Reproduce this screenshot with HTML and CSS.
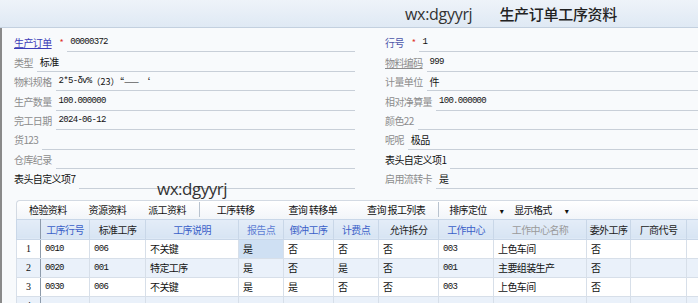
FILE: index.html
```html
<!DOCTYPE html>
<html lang="zh-CN">
<head>
  <meta charset="UTF-8" />
  <title>生产订单工序资料</title>
  <link rel="stylesheet" href="styles.css">
</head>
<body>

<header class="titlebar">
  <span class="tag">wx:dgyyrj</span>
  <span class="title">生产订单工序资料</span>
</header>

<main class="page">
  <section class="form">
    <div class="col">
      <div class="row"><span class="lbl link">生产订单</span><span class="req">*</span><span class="fld num">00000372</span></div>
      <div class="row"><span class="lbl">类型</span><span class="fld">标准</span></div>
      <div class="row"><span class="lbl">物料规格</span><span class="fld num">2*5-δv%<span class="wide">（23）“—— ‘</span></span></div>
      <div class="row"><span class="lbl">生产数量</span><span class="fld num">100.000000</span></div>
      <div class="row"><span class="lbl">完工日期</span><span class="fld num">2024-06-12</span></div>
      <div class="row"><span class="lbl">货123</span><span class="fld"></span></div>
      <div class="row"><span class="lbl">仓库纪录</span><span class="fld"></span></div>
      <div class="row"><span class="lbl dark">表头自定义项7</span><span class="fld"></span></div>
    </div>
    <div class="col">
      <div class="row"><span class="lbl blue">行号</span><span class="req">*</span><span class="fld num">1</span></div>
      <div class="row"><span class="lbl under">物料编码</span><span class="fld num">999</span></div>
      <div class="row"><span class="lbl">计量单位</span><span class="fld">件</span></div>
      <div class="row"><span class="lbl">相对净算量</span><span class="fld num">100.000000</span></div>
      <div class="row"><span class="lbl">颜色22</span><span class="fld"></span></div>
      <div class="row"><span class="lbl">呢呢</span><span class="fld">极品</span></div>
      <div class="row"><span class="lbl dark">表头自定义项1</span><span class="fld"></span></div>
      <div class="row"><span class="lbl">启用流转卡</span><span class="fld">是</span></div>
    </div>
  </section>

  <div class="stamp">wx:dgyyrj</div>

  <section class="grid">
    <div class="toolbar">
      <span class="btn">检验资料</span>
      <span class="btn">资源资料</span>
      <span class="btn">派工资料</span>
      <span class="sep"></span>
      <span class="btn w1">工序转移</span>
      <span class="btn w2">查询 转移单</span>
      <span class="btn">查询 报工列表</span>
      <span class="sep"></span>
      <span class="btn drop">排序定位<i>▾</i></span>
      <span class="btn drop">显示格式<i>▾</i></span>
    </div>
    <table>
      <colgroup>
        <col style="width:24px"><col style="width:49px"><col style="width:56px"><col style="width:93px">
        <col style="width:45px"><col style="width:50px"><col style="width:45px"><col style="width:60px">
        <col style="width:55px"><col style="width:93px"><col style="width:44px"><col style="width:56px">
        <col>
      </colgroup>
      <thead>
        <tr>
          <th class="rn"></th>
          <th class="b">工序行号</th>
          <th>标准工序</th>
          <th class="b">工序说明</th>
          <th class="b lite">报告点</th>
          <th class="b">倒冲工序</th>
          <th class="b">计费点</th>
          <th>允许拆分</th>
          <th class="b">工作中心</th>
          <th class="g">工作中心名称</th>
          <th>委外工序</th>
          <th>厂商代号</th>
          <th></th>
        </tr>
      </thead>
      <tbody>
        <tr>
          <td class="rn">1</td><td class="num">0010</td><td class="num">006</td><td>不关键</td>
          <td class="sel">是</td><td>否</td><td>否</td><td>否</td><td class="num">003</td>
          <td>上色车间</td><td>否</td><td></td><td></td>
        </tr>
        <tr>
          <td class="rn">2</td><td class="num">0020</td><td class="num">001</td><td>特定工序</td>
          <td>是</td><td>否</td><td>是</td><td>否</td><td class="num">001</td>
          <td>主要组装生产</td><td>否</td><td></td><td></td>
        </tr>
        <tr>
          <td class="rn">3</td><td class="num">0030</td><td class="num">006</td><td>不关键</td>
          <td>是</td><td>是</td><td>否</td><td>否</td><td class="num">003</td>
          <td>上色车间</td><td>否</td><td></td><td></td>
        </tr>
        <tr>
          <td class="rn">4</td><td></td><td></td><td></td><td></td><td></td><td></td>
          <td></td><td></td><td></td><td></td><td></td><td></td>
        </tr>
      </tbody>
    </table>
  </section>
</main>

</body>
</html>
```

FILE: styles.css
```css
* { box-sizing: border-box; margin: 0; padding: 0; }
body { width: 698px; height: 303px; overflow: hidden; background: #f8fafc; color: #111; font-family: "Noto Sans CJK SC", "DejaVu Sans", sans-serif; font-size: 10px; letter-spacing: -0.6px; }

/* title bar */
.titlebar { height: 28px; background: linear-gradient(#eef3f9, #dfe9f4); border-bottom: 1px solid #c3d0df; display: flex; align-items: center; padding-left: 405px; }
.titlebar .tag { font-family: "Open Sans", "DejaVu Sans", sans-serif; font-size: 16px; letter-spacing: -0.3px; color: #333; }
.titlebar .title { margin-left: 27px; font-size: 15px; letter-spacing: -0.3px; color: #222; font-weight: 500; }

.page { position: relative; height: 275px; border-left: 2px solid #8a8a8a; }

/* header form */
.form { display: grid; grid-template-columns: 341px 313px; column-gap: 30px; padding: 5px 0 0 12px; }
.row { height: 19.45px; display: flex; align-items: center; }
.lbl { color: #8c8c8c; white-space: nowrap; }
.lbl.link { color: #3c3cb8; text-decoration: underline; }
.lbl.blue { color: #4a54a8; }
.lbl.under { text-decoration: underline; }
.lbl.dark { color: #111; }
.req { color: #e0332b; margin-left: 8px; font-size: 9px; }
.fld { flex: 1; align-self: stretch; display: flex; align-items: center; margin-left: 4px; padding-left: 3px; border-bottom: 1px solid #c8cfd8; color: #111; white-space: nowrap; }
.num { font-family: "Liberation Mono", "DejaVu Sans Mono", monospace; font-size: 9px; letter-spacing: -0.7px; }
.num .wide { font-family: "Noto Sans CJK SC", sans-serif; font-size: 9px; letter-spacing: 0; }

.stamp { position: absolute; left: 155px; top: 149px; font-family: "Open Sans", "DejaVu Sans", sans-serif; font-size: 17px; letter-spacing: -0.5px; color: #333; }

/* grid */
.grid { margin: 11px 0 0 14px; }
.toolbar { height: 19px; display: flex; align-items: center; padding-left: 1px; background: linear-gradient(#ffffff, #f2f5f9); border-top: 1px solid #d3dae3; border-left: 1px solid #d3dae3; border-radius: 4px 0 0 0; }
.btn { padding: 0 11px; white-space: nowrap; color: #111; }
.btn.w1 { padding: 0 12px 0 15px; }
.btn.w2 { padding: 0 19px 0 22px; }
.btn.drop { padding: 0 3px 0 8px; }
.btn.drop i { font-style: normal; margin-left: 13px; font-size: 8px; }
.sep { width: 1px; height: 15px; background: #b9c3cf; margin: 0 2px; }

table { width: 684px; border-collapse: collapse; table-layout: fixed; }
th, td { height: 19px; border: 1px solid #d7dfe9; white-space: nowrap; overflow: hidden; }
th { height: 20px; background: linear-gradient(#e4edf8, #d7e4f3); font-weight: normal; color: #222; text-align: center; border-color: #c9d7e8; }
th.b { color: #3a5fc8; }
th.lite { color: #5c7dd4; }
th.g { color: #9a9a9a; }
td { padding-left: 4px; color: #111; }
tbody tr:nth-child(even) td { background: #eaf1fa; }
tbody tr:nth-child(odd) td { background: #ffffff; }
.rn { text-align: center; padding: 0; border-right: 1px solid #8d9bab; font-family: "Liberation Serif", "DejaVu Serif", serif; font-size: 10px; letter-spacing: 0; }
tbody tr td.sel { background: #cfe0f3; }
```
